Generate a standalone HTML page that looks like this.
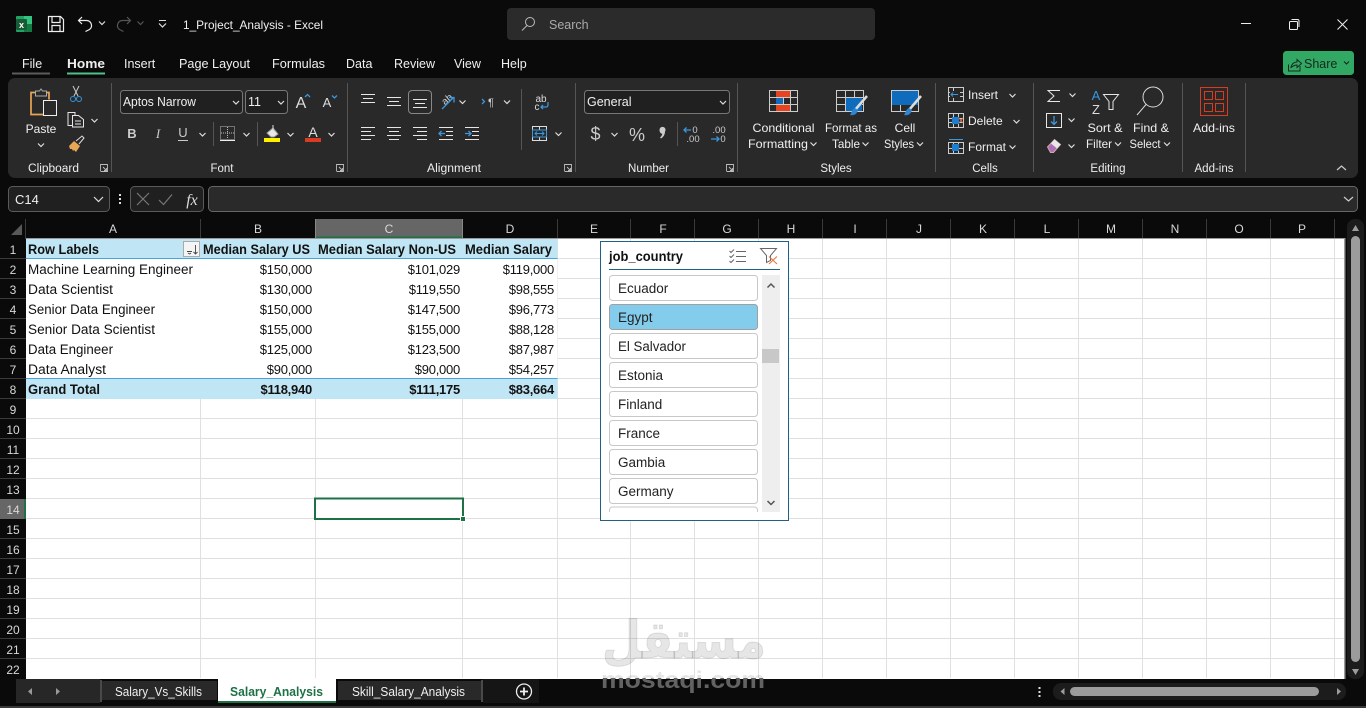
<!DOCTYPE html>
<html><head><meta charset="utf-8"><title>1_Project_Analysis - Excel</title>
<style>
html,body{margin:0;padding:0;width:1366px;height:708px;overflow:hidden;background:#0a0a0a}
svg{position:absolute;left:0;top:0;display:block;font-family:"Liberation Sans",sans-serif}
text{font-size:12px;fill:#f0f0f0}
.r{font-size:12px}
.m{text-anchor:middle}
.e{text-anchor:end}
.l{font-size:11.5px;fill:#eee}
.c{font-size:13.5px;fill:#111}
.n{font-size:13px;letter-spacing:-.25px;fill:#111;text-anchor:end}
.b{font-size:13.5px;fill:#111;font-weight:bold}
.be{font-size:13px;letter-spacing:-.25px;fill:#111;font-weight:bold;text-anchor:end}
.h{font-size:12px;fill:#d8d8d8;text-anchor:middle}
.s{font-size:13.5px;fill:#222}
.ic{fill:none;stroke:#e6e6e6;stroke-width:1}
.ch{fill:none;stroke:#ddd;stroke-width:1.2}
.bl{fill:none;stroke:#3a96dd;stroke-width:1.3}
</style></head><body>
<svg width="1366" height="708" viewBox="0 0 1366 708" xmlns="http://www.w3.org/2000/svg">
<defs><path id="cv" d="M-3-1.5L0 1.5L3-1.5" fill="none" stroke="#ddd" stroke-width="1.2"/>
<linearGradient id="wg" gradientUnits="userSpaceOnUse" x1="0" y1="600" x2="0" y2="700">
<stop offset="0" stop-color="#000" stop-opacity=".1"/><stop offset=".78" stop-color="#000" stop-opacity=".1"/>
<stop offset=".78" stop-color="#626262" stop-opacity="1"/><stop offset="1" stop-color="#626262" stop-opacity="1"/>
</linearGradient></defs>
<rect width="1366" height="708" fill="#0a0a0a"/>

<!-- Title bar -->
<rect x="16" y="16" width="16" height="16" rx="1" fill="#21a366"/><rect x="24" y="16" width="8" height="8" fill="#33c481"/><rect x="24" y="24" width="8" height="8" fill="#107c41"/>
<rect x="16" y="19" width="11" height="11" rx="1" fill="#185c37"/><text x="21.5" y="28" class="m" style="font-size:9px;font-weight:bold;fill:#fff">x</text>
<path d="M48.5 16.5h12l3 3v12h-15zM52 16.500v6h8v-6M52 31.500v-6h8v6" fill="none" stroke="#eee" stroke-width="1.2"/>
<path d="M82 17l-3.500 3.500 3.500 3.500M78.500 20.500h8a5 5 0 0 1 3 9l-4 2" fill="none" stroke="#eee" stroke-width="1.2"/>
<use href="#cv" x="102" y="23"/>
<path d="M127 17l3.500 3.500-3.500 3.500M130.500 20.500h-8a5 5 0 0 0-3 9l4 2" fill="none" stroke="#555" stroke-width="1.2"/>
<path d="M137.500 21.500L140.500 24.500L143.500 21.500" fill="none" stroke="#555" stroke-width="1.2"/>
<path d="M159 20.500h7" stroke="#ddd" fill="none"/><path d="M159 23.500L162.500 27L166 23.500" fill="none" stroke="#ddd" stroke-width="1.2"/>
<text x="183" y="29" style="font-size:12px" textLength="140" lengthAdjust="spacingAndGlyphs">1_Project_Analysis  -  Excel</text>
<rect x="507" y="8" width="368" height="32" rx="4" fill="#2b2b2b"/>
<circle cx="530" cy="22" r="4.500" fill="none" stroke="#bbb"/><path d="M527 25.500L522 30.500" stroke="#bbb" fill="none"/>
<text x="549" y="29" style="font-size:12.500px;fill:#aaa">Search</text>
<path d="M1241 23.500h10" stroke="#eee" fill="none"/>
<rect x="1289.500" y="21.500" width="8" height="8" rx="1" fill="none" stroke="#eee"/><path d="M1291.500 19.500h6a1.500 1.500 0 0 1 1.500 1.500v6" fill="none" stroke="#eee"/>
<path d="M1337.500 19.500l10 10M1347.500 19.500l-10 10" stroke="#eee" fill="none"/>

<!-- Ribbon tabs -->
<g style="font-size:12.500px">
<text x="22" y="68" style="font-size:12.500px">File</text>
<text x="67" y="68" style="font-size:13px;font-weight:bold;fill:#eee" textLength="38" lengthAdjust="spacingAndGlyphs">Home</text>
<text x="124" y="68" style="font-size:12.500px">Insert</text>
<text x="179" y="68" style="font-size:12.500px" textLength="71" lengthAdjust="spacingAndGlyphs">Page Layout</text>
<text x="272" y="68" style="font-size:12.500px" textLength="53" lengthAdjust="spacingAndGlyphs">Formulas</text>
<text x="346" y="68" style="font-size:12.500px">Data</text>
<text x="394" y="68" style="font-size:12.500px">Review</text>
<text x="454" y="68" style="font-size:12.500px">View</text>
<text x="501" y="68" style="font-size:12.500px">Help</text>
</g>
<rect x="12" y="72.500" width="38" height="2" fill="#5c5c5c"/>
<rect x="67" y="72.500" width="38" height="2" fill="#4fc08a"/>
<rect x="1283" y="51" width="71" height="24" rx="3.500" fill="#32a865"/>
<path d="M1288.500 64.500v6.500h11.500v-5M1291 67c1-3 3-5 6-5v-2.500l4.500 4-4.500 4v-2.500c-2 0-4 1-6 2.500z" fill="none" stroke="#152a1e" stroke-width="1"/>
<text x="1304" y="68" style="font-size:12.500px;fill:#14281c">Share</text>
<path d="M1344 61.500l2.500 2.500 2.500-2.500" fill="none" stroke="#14281c" stroke-width="1.100"/>

<!-- Ribbon -->
<rect x="8" y="78" width="1350" height="100" rx="7" fill="#292929"/>
<g stroke="#555" stroke-width="1" fill="none">
<path d="M111.500 83v89M347.500 83v89M575.500 83v89M737.500 83v89M935.500 83v89M1033.500 83v89M1182.500 83v89M1245.500 83v89M521.500 89v61M213.500 122v24M257.500 122v24M677.500 122v24"/>
</g>

<!-- Clipboard -->
<path d="M41 92.500h-10v22h12" fill="none" stroke="#e8a555" stroke-width="1.700"/><path d="M41 92.500h8v7" fill="none" stroke="#e8a555" stroke-width="1.700"/>
<path d="M35.500 96v-5h4l1.500-2 1.500 2h4v5z" fill="#292929" stroke="#aaa"/>
<rect x="43.500" y="100.500" width="13" height="15" fill="#292929" stroke="#eee"/>
<text x="41" y="133" class="m" style="font-size:12px">Paste</text><use href="#cv" x="41" y="145"/>
<path d="M73 86l5 10M79 86l-5 10" stroke="#ccc" fill="none"/><circle cx="73" cy="99" r="2.500" fill="none" stroke="#3a96dd"/><circle cx="79" cy="99" r="2.500" fill="none" stroke="#3a96dd"/>
<path d="M72 125.500h-4v-13h7v3M72.500 115.500h6l5 4v7.500h-11z" class="ic"/><path d="M75 121h6M75 124h6" class="ic"/>
<use href="#cv" x="94.500" y="120.500"/>
<path d="M69 146l5-5 6 5-4 6-2-2-1 1-1-2-2 0z" fill="#e8a555"/><path d="M76 141l6-5 2 2-5 6" fill="none" stroke="#ddd"/>
<text x="28" y="172" class="l" textLength="51" lengthAdjust="spacingAndGlyphs">Clipboard</text>
<path d="M100.500 171v-6.500h7v7h-7M103 167l3.500 3.500M106.500 168v2.500h-2.500" fill="none" stroke="#bbb" stroke-width=".9"/>

<!-- Font -->
<rect x="120.500" y="90.500" width="122" height="23" rx="3" fill="#202020" stroke="#777"/>
<text x="123" y="106" style="font-size:12.500px" textLength="73" lengthAdjust="spacingAndGlyphs">Aptos Narrow</text><use href="#cv" x="236" y="102.500"/>
<rect x="245.500" y="90.500" width="42" height="23" rx="3" fill="#202020" stroke="#777"/>
<text x="248" y="106" style="font-size:12.500px">11</text><use href="#cv" x="281" y="102.500"/>
<text x="301" y="108" class="m" style="font-size:16px;fill:#ddd">A</text><path d="M305 97l2.500-2.500 2.500 2.500" class="bl" />
<text x="327" y="107" class="m" style="font-size:13px;fill:#ddd">A</text><path d="M332 95.500l2.500 2.500 2.500-2.500" class="bl"/>
<text x="132" y="138" class="m" style="font-size:13px;font-weight:bold;fill:#ccc">B</text>
<text x="158" y="138" class="m" style="font-size:13px;font-style:italic;fill:#ccc;font-family:'Liberation Serif',serif">I</text>
<text x="183" y="137" class="m" style="font-size:13px;fill:#ccc">U</text><path d="M178 140.500h10" stroke="#ccc" fill="none"/>
<use href="#cv" x="202.500" y="134.500"/>
<rect x="220.500" y="126.500" width="14" height="13" fill="none" stroke="#bbb" stroke-dasharray="1 1"/><path d="M227.500 127v12M221 133h13" stroke="#bbb" stroke-dasharray="1 1" fill="none"/><path d="M220 140.500h15" stroke="#eee" fill="none"/>
<use href="#cv" x="246.500" y="134.500"/>
<path d="M267 133l6-5 5 6-4 3h-3z" fill="#e8e8e8" stroke="#999"/><path d="M273 125v6" stroke="#ddd" fill="none"/>
<rect x="264" y="138" width="16" height="4" fill="#ffef00"/><use href="#cv" x="290.500" y="134.500"/>
<text x="313" y="137" class="m" style="font-size:14px;fill:#ddd">A</text><rect x="305" y="138" width="16" height="4" fill="#d83b1f"/><use href="#cv" x="331.500" y="134.500"/>
<text x="222" y="172" class="l m">Font</text>
<path d="M336.500 171v-6.500h7v7h-7M339 167l3.500 3.500M342.500 168v2.500h-2.500" fill="none" stroke="#bbb" stroke-width=".9" transform="translate(0,0)"/>

<!-- Alignment -->
<g stroke="#e6e6e6" fill="none">
<path d="M361 94.500h14M363 98.500h10M361 102.500h14"/>
<path d="M387 97.500h14M389 101.500h10M387 105.500h14"/>
<path d="M413 99.500h14M415 103.500h10M413 107.500h14"/>
<path d="M361 127.500h14M361 131.500h10M361 135.500h14M361 139.500h10"/>
<path d="M387 127.500h14M389 131.500h10M387 135.500h14M389 139.500h10"/>
<path d="M413 127.500h14M417 131.500h10M413 135.500h14M417 139.500h10"/>
<path d="M439 127.500h14M446 131.500h7M446 135.500h7M439 139.500h14"/>
<path d="M465 127.500h14M472 131.500h7M472 135.500h7M465 139.500h14"/>
</g>
<rect x="408.500" y="90.500" width="23" height="23" rx="3.500" fill="none" stroke="#888"/>
<path d="M445 133.500h-6M441.500 131l-2.500 2.500 2.500 2.500" class="bl"/><path d="M465 133.500h6M468.500 131l2.500 2.500-2.500 2.500" class="bl"/>
<text x="447" y="104" class="m" style="font-size:10px;fill:#ccc" transform="rotate(-40 445 100)">ab</text>
<path d="M442 109l11-11M449 97.500h5v5" class="bl"/>
<use href="#cv" x="462.500" y="102"/>
<path d="M482 99l2.500 2.500-2.500 2.500" class="bl"/><text x="491" y="106" class="m" style="font-size:11px;fill:#ccc">¶</text><use href="#cv" x="507" y="102"/>
<text x="541" y="102" class="m" style="font-size:10px;fill:#ddd">ab</text><text x="537" y="110" class="m" style="font-size:10px;fill:#ddd">c</text>
<path d="M548 102v3a2 2 0 0 1-2 2h-5M543 105l-2 2 2 2" class="bl"/>
<rect x="532.500" y="126.500" width="14" height="14" fill="none" stroke="#ddd"/><rect x="532.500" y="130" width="14" height="7" fill="none" stroke="#3a96dd"/>
<path d="M535 133.500h9M537 131.500l-2 2 2 2M542 131.500l2 2-2 2" class="bl" style="stroke-width:1"/>
<path d="M539.500 126.500v3M539.500 137.500v3" stroke="#ddd" fill="none"/><use href="#cv" x="558.500" y="134"/>
<text x="427" y="172" class="l" textLength="54" lengthAdjust="spacingAndGlyphs">Alignment</text>
<path d="M564.500 171v-6.500h7v7h-7M567 167l3.500 3.500M570.500 168v2.500h-2.500" fill="none" stroke="#bbb" stroke-width=".9"/>

<!-- Number -->
<rect x="584.500" y="90.500" width="145" height="23" rx="3" fill="#202020" stroke="#777"/>
<text x="587" y="106" style="font-size:12.500px">General</text><use href="#cv" x="723" y="102.500"/>
<text x="595.500" y="140" class="m" style="font-size:18px;fill:#ccc">$</text><use href="#cv" x="614.500" y="134.500"/>
<text x="637" y="141" class="m" style="font-size:18px;fill:#ccc">%</text>
<path d="M659.500 130a3 3 0 1 1 5.500 1.500c0 3-1.500 5.500-4 7l-1-1c1.300-1 2-2.300 2.300-3.800-1.500.2-2.800-1.700-2.800-3.700z" fill="#ccc"/>
<text x="695" y="133" class="m" style="font-size:9.500px;fill:#ccc">0</text><text x="693" y="142" class="m" style="font-size:9.500px;fill:#ccc">.00</text>
<path d="M684 130h7M686.500 127.500l-2.500 2.500 2.500 2.500" class="bl"/>
<text x="719" y="133" class="m" style="font-size:9.500px;fill:#ccc">.00</text><text x="723" y="142" class="m" style="font-size:9.500px;fill:#ccc">0</text>
<path d="M711 139h8M716.500 136.500l2.500 2.500-2.500 2.500" class="bl"/>
<text x="628" y="172" class="l" textLength="41" lengthAdjust="spacingAndGlyphs">Number</text>
<path d="M726.500 171v-6.500h7v7h-7M729 167l3.500 3.500M732.500 168v2.500h-2.500" fill="none" stroke="#bbb" stroke-width=".9"/>

<!-- Styles -->
<rect x="769.500" y="90.500" width="28" height="21" fill="#292929" stroke="#ccc"/>
<path d="M776.500 90.500v21M783.500 90.500v21M790.500 90.500v21M769.500 97.500h28M769.500 104.500h28" stroke="#ccc" fill="none"/>
<rect x="776" y="91" width="14" height="6" fill="#e8431f"/><rect x="776" y="98" width="7" height="6" fill="#0f6cbd"/><rect x="776" y="105" width="14" height="6" fill="#e8431f"/>
<g>
<rect x="836.500" y="90.500" width="27" height="21" fill="none" stroke="#ccc"/><path d="M845.500 90.500v21M854.500 90.500v21M836.500 97.500h27M836.500 104.500h27" stroke="#ccc" fill="none"/>
<rect x="846" y="98" width="16" height="13" fill="#0f6cbd"/>
<path d="M867 96l-12 14" stroke="#ddd" stroke-width="2.500" fill="none"/><path d="M855 108c-3 1-3 4-5 7 4 1 7-1 8-5z" fill="#2e86d0"/>
<rect x="891.500" y="90.500" width="27" height="21" fill="none" stroke="#ccc"/><path d="M891.500 97.500h27M891.500 104.500h27M900.500 97.500v14" stroke="#ccc" fill="none"/>
<rect x="892" y="91" width="26" height="14" fill="#0f6cbd"/>
<path d="M921 96l-12 14" stroke="#ddd" stroke-width="2.500" fill="none"/><path d="M909 108c-3 1-3 4-5 7 4 1 7-1 8-5z" fill="#2e86d0"/>
</g>
<text x="783.500" y="132" class="m r" textLength="62" lengthAdjust="spacingAndGlyphs">Conditional</text>
<text x="778" y="148" class="m r" textLength="60" lengthAdjust="spacingAndGlyphs">Formatting</text><use href="#cv" x="813.500" y="144"/>
<text x="851" y="132" class="m r" textLength="52" lengthAdjust="spacingAndGlyphs">Format as</text>
<text x="846" y="148" class="m r" textLength="28" lengthAdjust="spacingAndGlyphs">Table</text><use href="#cv" x="865.500" y="144"/>
<text x="905" y="132" class="m r">Cell</text><text x="899" y="148" class="m r" textLength="30" lengthAdjust="spacingAndGlyphs">Styles</text><use href="#cv" x="920" y="144"/>
<text x="836" y="172" class="l m">Styles</text>

<!-- Cells -->
<rect x="948.500" y="87.500" width="15" height="14" fill="none" stroke="#ccc"/><path d="M953.500 87.500v14M948.500 92.500h15M948.500 96.500h15" stroke="#ccc" fill="none"/><rect x="950" y="91" width="10" height="7" fill="#292929"/><path d="M958 94.500h-7M953 92.500l-2 2 2 2" class="bl" style="stroke-width:1"/>
<rect x="948.500" y="113.500" width="15" height="14" fill="none" stroke="#ccc"/><path d="M953.500 113.500v14M958.500 113.500v14M948.500 118.500h15M948.500 122.500h15" stroke="#ccc" fill="none"/><rect x="952" y="117" width="7" height="7" fill="#1e7fd0"/><path d="M959 118l4 5M963 118l-4 5" stroke="#e8743f" fill="none"/>
<rect x="948.500" y="142.500" width="15" height="11" fill="none" stroke="#ccc"/><path d="M953.500 142.500v11M958.500 142.500v11M948.500 148.500h15" stroke="#ccc" fill="none"/><rect x="952" y="144" width="7" height="7" fill="#1e7fd0"/><path d="M949 139.500h14" stroke="#3a96dd" fill="none"/>
<text x="968" y="99" class="r">Insert</text><use href="#cv" x="1012.500" y="95.500"/>
<text x="968" y="125" class="r">Delete</text><use href="#cv" x="1016.500" y="121.500"/>
<text x="968" y="151" class="r" textLength="38" lengthAdjust="spacingAndGlyphs">Format</text><use href="#cv" x="1012.500" y="147"/>
<text x="985" y="172" class="l m">Cells</text>

<!-- Editing -->
<path d="M1060 90.500h-12l6 5.500-6 5.500h12" class="ic"/><use href="#cv" x="1072.500" y="95"/>
<rect x="1046.500" y="113.500" width="15" height="14" class="ic"/><path d="M1054 116v8M1051 121.500l3 3 3-3" class="bl"/><use href="#cv" x="1071.500" y="120"/>
<path d="M1047.500 147l7-7.500 6 5-7 8h-3z" fill="#b06fb5" stroke="#caa"/><path d="M1054.500 139.500l6 5-3.500 4-6-5z" fill="#e8e8e8"/><use href="#cv" x="1071.500" y="146"/>
<text x="1096" y="100" class="m" style="font-size:13px;fill:#3a96dd">A</text><text x="1096" y="114" class="m" style="font-size:13px;fill:#ddd">Z</text>
<path d="M1103.500 94.500h15l-5.500 7v8h-4v-8z" class="ic"/>
<circle cx="1153" cy="97" r="10" fill="none" stroke="#ddd"/><path d="M1146 104.500l-9 10.500" stroke="#ddd" fill="none"/>
<text x="1105" y="132" class="m r" textLength="35" lengthAdjust="spacingAndGlyphs">Sort &amp;</text>
<text x="1099" y="148" class="m r" textLength="26" lengthAdjust="spacingAndGlyphs">Filter</text><use href="#cv" x="1118" y="144"/>
<text x="1151" y="132" class="m r" textLength="36" lengthAdjust="spacingAndGlyphs">Find &amp;</text>
<text x="1145" y="148" class="m r" textLength="31" lengthAdjust="spacingAndGlyphs">Select</text><use href="#cv" x="1167" y="144"/>
<text x="1108" y="172" class="l m">Editing</text>

<!-- Add-ins -->
<rect x="1200.500" y="87.500" width="27" height="28" fill="none" stroke="#d83b1f"/>
<g fill="none" stroke="#d83b1f"><rect x="1204.500" y="91.500" width="8" height="8"/><rect x="1215.500" y="91.500" width="8" height="8"/><rect x="1204.500" y="103.500" width="8" height="8"/><rect x="1215.500" y="103.500" width="8" height="8"/></g>
<text x="1214" y="132" class="m r" textLength="42" lengthAdjust="spacingAndGlyphs">Add-ins</text>
<text x="1214" y="172" class="l m">Add-ins</text>
<path d="M1337 170l4.500-4 4.500 4" fill="none" stroke="#ccc" stroke-width="1.200"/>

<!-- Formula bar -->
<rect x="8.500" y="186.500" width="101" height="25" rx="4" fill="#202020" stroke="#5a5a5a"/>
<text x="15" y="204" style="font-size:13px;fill:#eee">C14</text><path d="M94 197l4.500 4.500 4.500-4.500" fill="none" stroke="#ddd" stroke-width="1.200"/>
<g fill="#ddd"><rect x="119" y="194" width="2" height="2"/><rect x="119" y="198" width="2" height="2"/><rect x="119" y="202" width="2" height="2"/></g>
<rect x="130.500" y="186.500" width="73" height="25" rx="4" fill="#202020" stroke="#5a5a5a"/>
<path d="M137 193l12 12M149 193l-12 12M159 200l4.500 4.500 8.500-10" fill="none" stroke="#777" stroke-width="1.200"/>
<text x="192" y="205" class="m" style="font-size:16px;font-style:italic;fill:#ddd;font-family:'Liberation Serif',serif">fx</text>
<rect x="208.500" y="186.500" width="1149" height="25" rx="4" fill="#2a2a2a" stroke="#666"/>
<path d="M1344 197l4.500 4 4.500-4" fill="none" stroke="#ccc" stroke-width="1.200"/>

<!-- Headers -->
<path d="M22 224v11H11z" fill="#595959"/>
<rect x="315" y="219" width="148" height="18" fill="#666"/>
<rect x="315" y="236.500" width="148" height="2" fill="#1e7145"/>
<g stroke="#3a3a3a" fill="none">
<path d="M25.500 219v20M200.500 219v20M557.500 219v20M630.500 219v20M694.500 219v20M758.500 219v20M822.500 219v20M886.500 219v20M950.500 219v20M1014.500 219v20M1078.500 219v20M1142.500 219v20M1206.500 219v20M1270.500 219v20M1334.500 219v20"/>
<path d="M0 258.500h26M0 278.500h26M0 298.500h26M0 318.500h26M0 338.500h26M0 358.500h26M0 378.500h26M0 398.500h26M0 418.500h26M0 438.500h26M0 458.500h26M0 478.500h26M0 518.500h26M0 538.500h26M0 558.500h26M0 578.500h26M0 598.500h26M0 618.500h26M0 638.500h26M0 658.500h26"/>
</g>
<path d="M315.500 219v19M462.500 219v19" stroke="#888" fill="none"/>
<g>
<text x="113" y="233" class="h">A</text><text x="258" y="233" class="h">B</text><text x="389" y="233" class="h">C</text><text x="510" y="233" class="h">D</text><text x="594" y="233" class="h">E</text><text x="663" y="233" class="h">F</text><text x="727" y="233" class="h">G</text><text x="791" y="233" class="h">H</text><text x="855" y="233" class="h">I</text><text x="919" y="233" class="h">J</text><text x="983" y="233" class="h">K</text><text x="1047" y="233" class="h">L</text><text x="1111" y="233" class="h">M</text><text x="1175" y="233" class="h">N</text><text x="1239" y="233" class="h">O</text><text x="1302" y="233" class="h">P</text>
</g>
<rect x="0" y="499" width="25" height="20" fill="#666"/><rect x="24" y="499" width="2" height="20" fill="#1e7145"/>
<g>
<text x="13" y="254" class="h">1</text><text x="13" y="274" class="h">2</text><text x="13" y="294" class="h">3</text><text x="13" y="314" class="h">4</text><text x="13" y="334" class="h">5</text><text x="13" y="354" class="h">6</text><text x="13" y="374" class="h">7</text><text x="13" y="394" class="h">8</text><text x="13" y="414" class="h">9</text><text x="13" y="434" class="h">10</text><text x="13" y="454" class="h">11</text><text x="13" y="474" class="h">12</text><text x="13" y="494" class="h">13</text><text x="13" y="514" class="h">14</text><text x="13" y="534" class="h">15</text><text x="13" y="554" class="h">16</text><text x="13" y="574" class="h">17</text><text x="13" y="594" class="h">18</text><text x="13" y="614" class="h">19</text><text x="13" y="634" class="h">20</text><text x="13" y="654" class="h">21</text><text x="13" y="674" class="h">22</text>
</g>

<!-- Grid -->
<rect x="26" y="238" width="1319" height="441" fill="#fff"/>
<rect x="26" y="238" width="1319" height="1" fill="#9a9a9a"/>
<g stroke="#e0e0e0" fill="none">
<path d="M26 258.500h1319M26 278.500h1319M26 298.500h1319M26 318.500h1319M26 338.500h1319M26 358.500h1319M26 378.500h1319M26 398.500h1319M26 418.500h1319M26 438.500h1319M26 458.500h1319M26 478.500h1319M26 498.500h1319M26 518.500h1319M26 538.500h1319M26 558.500h1319M26 578.500h1319M26 598.500h1319M26 618.500h1319M26 638.500h1319M26 658.500h1319"/>
<path d="M200.500 239v439M315.500 239v439M462.500 239v439M557.500 239v439M630.500 239v439M694.500 239v439M758.500 239v439M822.500 239v439M886.500 239v439M950.500 239v439M1014.500 239v439M1078.500 239v439M1142.500 239v439M1206.500 239v439M1270.500 239v439M1334.500 239v439"/>
</g>
<rect x="26" y="259" width="531.500" height="119" fill="#fff"/>
<rect x="26" y="239" width="531.500" height="19" fill="#c0e6f5"/>
<rect x="26" y="258" width="531.500" height="1" fill="#45a5dc"/>
<rect x="26" y="379" width="531.500" height="19" fill="#c0e6f5"/>
<rect x="26" y="378" width="531.500" height="1" fill="#45a5dc"/>
<rect x="26" y="398" width="531.500" height="1" fill="#c0e6f5"/>

<text x="28" y="254" class="b" textLength="71" lengthAdjust="spacingAndGlyphs">Row Labels</text>
<rect x="183.500" y="241.500" width="16" height="15" fill="#f4f4f4" stroke="#aaa"/>
<path d="M187 251.500h5M188 253l1.500 1 1.500-1M195.500 245v9M193.500 252l2 2 2-2" stroke="#444" fill="none" stroke-width=".9"/>
<text x="203" y="254" class="b" textLength="107" lengthAdjust="spacingAndGlyphs">Median Salary US</text>
<text x="318" y="254" class="b" textLength="138" lengthAdjust="spacingAndGlyphs">Median Salary Non-US</text>
<text x="465" y="254" class="b" textLength="87" lengthAdjust="spacingAndGlyphs">Median Salary</text>

<text x="28" y="274" class="c" textLength="165" lengthAdjust="spacingAndGlyphs">Machine Learning Engineer</text><text x="312" y="274" class="n">$150,000</text><text x="460" y="274" class="n">$101,029</text><text x="554" y="274" class="n">$119,000</text>
<text x="28" y="294" class="c" textLength="85" lengthAdjust="spacingAndGlyphs">Data Scientist</text><text x="312" y="294" class="n">$130,000</text><text x="460" y="294" class="n">$119,550</text><text x="554" y="294" class="n">$98,555</text>
<text x="28" y="314" class="c" textLength="127" lengthAdjust="spacingAndGlyphs">Senior Data Engineer</text><text x="312" y="314" class="n">$150,000</text><text x="460" y="314" class="n">$147,500</text><text x="554" y="314" class="n">$96,773</text>
<text x="28" y="334" class="c" textLength="127" lengthAdjust="spacingAndGlyphs">Senior Data Scientist</text><text x="312" y="334" class="n">$155,000</text><text x="460" y="334" class="n">$155,000</text><text x="554" y="334" class="n">$88,128</text>
<text x="28" y="354" class="c" textLength="85" lengthAdjust="spacingAndGlyphs">Data Engineer</text><text x="312" y="354" class="n">$125,000</text><text x="460" y="354" class="n">$123,500</text><text x="554" y="354" class="n">$87,987</text>
<text x="28" y="374" class="c" textLength="78" lengthAdjust="spacingAndGlyphs">Data Analyst</text><text x="312" y="374" class="n">$90,000</text><text x="460" y="374" class="n">$90,000</text><text x="554" y="374" class="n">$54,257</text>
<text x="28" y="394" class="b" textLength="72" lengthAdjust="spacingAndGlyphs">Grand Total</text><text x="312" y="394" class="be">$118,940</text><text x="460" y="394" class="be">$111,175</text><text x="554" y="394" class="be">$83,664</text>

<!-- Selection -->
<rect x="315" y="498.500" width="148" height="20.500" fill="none" stroke="#1e7145" stroke-width="2"/>
<rect x="460.500" y="516.500" width="5" height="5" fill="#1e7145" stroke="#fff"/>

<!-- Slicer -->
<rect x="600.500" y="241.500" width="188" height="279" fill="#fff" stroke="#1f6185"/>
<text x="609" y="261" class="b" textLength="74" lengthAdjust="spacingAndGlyphs">job_country</text>
<path d="M729.500 251l1.500 1.500 3-3M729.500 256l1.500 1.500 3-3M729.500 261l1.500 1.500 3-3M736 251.500h10M736 256.500h10M736 261.500h10" fill="none" stroke="#666" stroke-width="1"/>
<path d="M760.500 248.500h16l-6 7v5l-4 2v-7z" fill="none" stroke="#666"/><path d="M769 256.500l8 7.500M777 256.500l-8 7.500" stroke="#e8703a" fill="none"/>
<rect x="609" y="269" width="171" height="1" fill="#1f6185"/>
<g fill="#fff" stroke="#c8c8c8">
<rect x="609.500" y="275.500" width="148" height="25" rx="3"/>
<rect x="609.500" y="304.500" width="148" height="25" rx="3" fill="#84ccec" stroke="#a0a0a0"/>
<rect x="609.500" y="333.500" width="148" height="25" rx="3"/>
<rect x="609.500" y="362.500" width="148" height="25" rx="3"/>
<rect x="609.500" y="391.500" width="148" height="25" rx="3"/>
<rect x="609.500" y="420.500" width="148" height="25" rx="3"/>
<rect x="609.500" y="449.500" width="148" height="25" rx="3"/>
<rect x="609.500" y="478.500" width="148" height="25" rx="3"/>
<path d="M609.500 512v-2a3 3 0 0 1 3-3h142a3 3 0 0 1 3 3v2" fill="none"/>
</g>
<text x="618" y="293" class="s">Ecuador</text><text x="618" y="322" class="s">Egypt</text><text x="618" y="351" class="s" textLength="68" lengthAdjust="spacingAndGlyphs">El Salvador</text><text x="618" y="380" class="s">Estonia</text><text x="618" y="409" class="s">Finland</text><text x="618" y="438" class="s">France</text><text x="618" y="467" class="s">Gambia</text><text x="618" y="496" class="s">Germany</text>
<rect x="762" y="275" width="18" height="237" fill="#eee"/>
<rect x="762" y="349" width="17" height="14" fill="#c8c8c8"/>
<path d="M767.500 287.500l3.500-3.500 3.500 3.500M767.500 501l3.500 3.500 3.500-3.500" fill="none" stroke="#555" stroke-width="1.500"/>

<!-- Vertical scrollbar -->
<rect x="1347" y="219" width="17" height="460" rx="8" fill="#1c1c1c"/>
<rect x="1344" y="238" width="1.500" height="441" fill="#9a9a9a"/>
<rect x="1351" y="236" width="9" height="426" rx="4.500" fill="#9c9c9c"/>
<path d="M1352 669h7l-3.500 6z" fill="#9c9c9c"/>
<path d="M1352 231l3.500-6 3.500 6z" fill="#9c9c9c"/>

<!-- Sheet tabs -->
<rect x="0" y="679" width="1366" height="27" fill="#0a0a0a"/>
<rect x="0" y="706" width="1366" height="2" fill="#3a3a3a"/>
<rect x="16" y="679" width="84" height="24" fill="#272727"/>
<path d="M32 688v7l-4-3.500zM56 688v7l4-3.500z" fill="#999"/>
<rect x="100.500" y="680" width="1" height="22" fill="#888"/>
<rect x="102" y="681" width="115" height="19" fill="#292929"/>
<rect x="338" y="681" width="143" height="19" fill="#292929"/>
<rect x="481.500" y="680" width="1" height="22" fill="#888"/>
<rect x="218" y="678" width="118" height="25" fill="#fff"/>
<rect x="218" y="701" width="118" height="2" fill="#1e7145"/>
<text x="115" y="696" style="font-size:12.500px" textLength="87" lengthAdjust="spacingAndGlyphs">Salary_Vs_Skills</text>
<text x="230" y="696" style="font-size:12.500px;font-weight:bold;fill:#1e7145" textLength="93" lengthAdjust="spacingAndGlyphs">Salary_Analysis</text>
<text x="352" y="696" style="font-size:12.500px" textLength="113" lengthAdjust="spacingAndGlyphs">Skill_Salary_Analysis</text>
<rect x="483" y="679" width="56" height="24" fill="#151515"/>
<circle cx="524" cy="691.500" r="7.500" fill="none" stroke="#eee" stroke-width="1.300"/><path d="M520 691.500h8M524 687.500v8" stroke="#eee" stroke-width="1.800" fill="none"/>
<g fill="#ddd"><rect x="1038.500" y="687" width="2" height="2"/><rect x="1038.500" y="691" width="2" height="2"/><rect x="1038.500" y="695" width="2" height="2"/></g>
<rect x="1053" y="683" width="293" height="17" rx="8" fill="#1c1c1c"/>
<rect x="1070" y="687" width="249" height="9" rx="4.500" fill="#9c9c9c"/>
<path d="M1064.500 688v7l-4-3.500zM1337 688v7l4-3.500z" fill="#9c9c9c"/>

<!-- Watermark -->
<text x="601" y="658" direction="rtl" style="font:bold 52px 'DejaVu Sans',sans-serif;fill:url(#wg);stroke:url(#wg);stroke-width:1" textLength="164" lengthAdjust="spacingAndGlyphs" transform="translate(165 0)">مستقل</text>
<text x="601" y="688" style="font-size:24px;font-weight:bold;fill:url(#wg)" textLength="164" lengthAdjust="spacingAndGlyphs">mostaqi.com</text>
</svg>
</body></html>
